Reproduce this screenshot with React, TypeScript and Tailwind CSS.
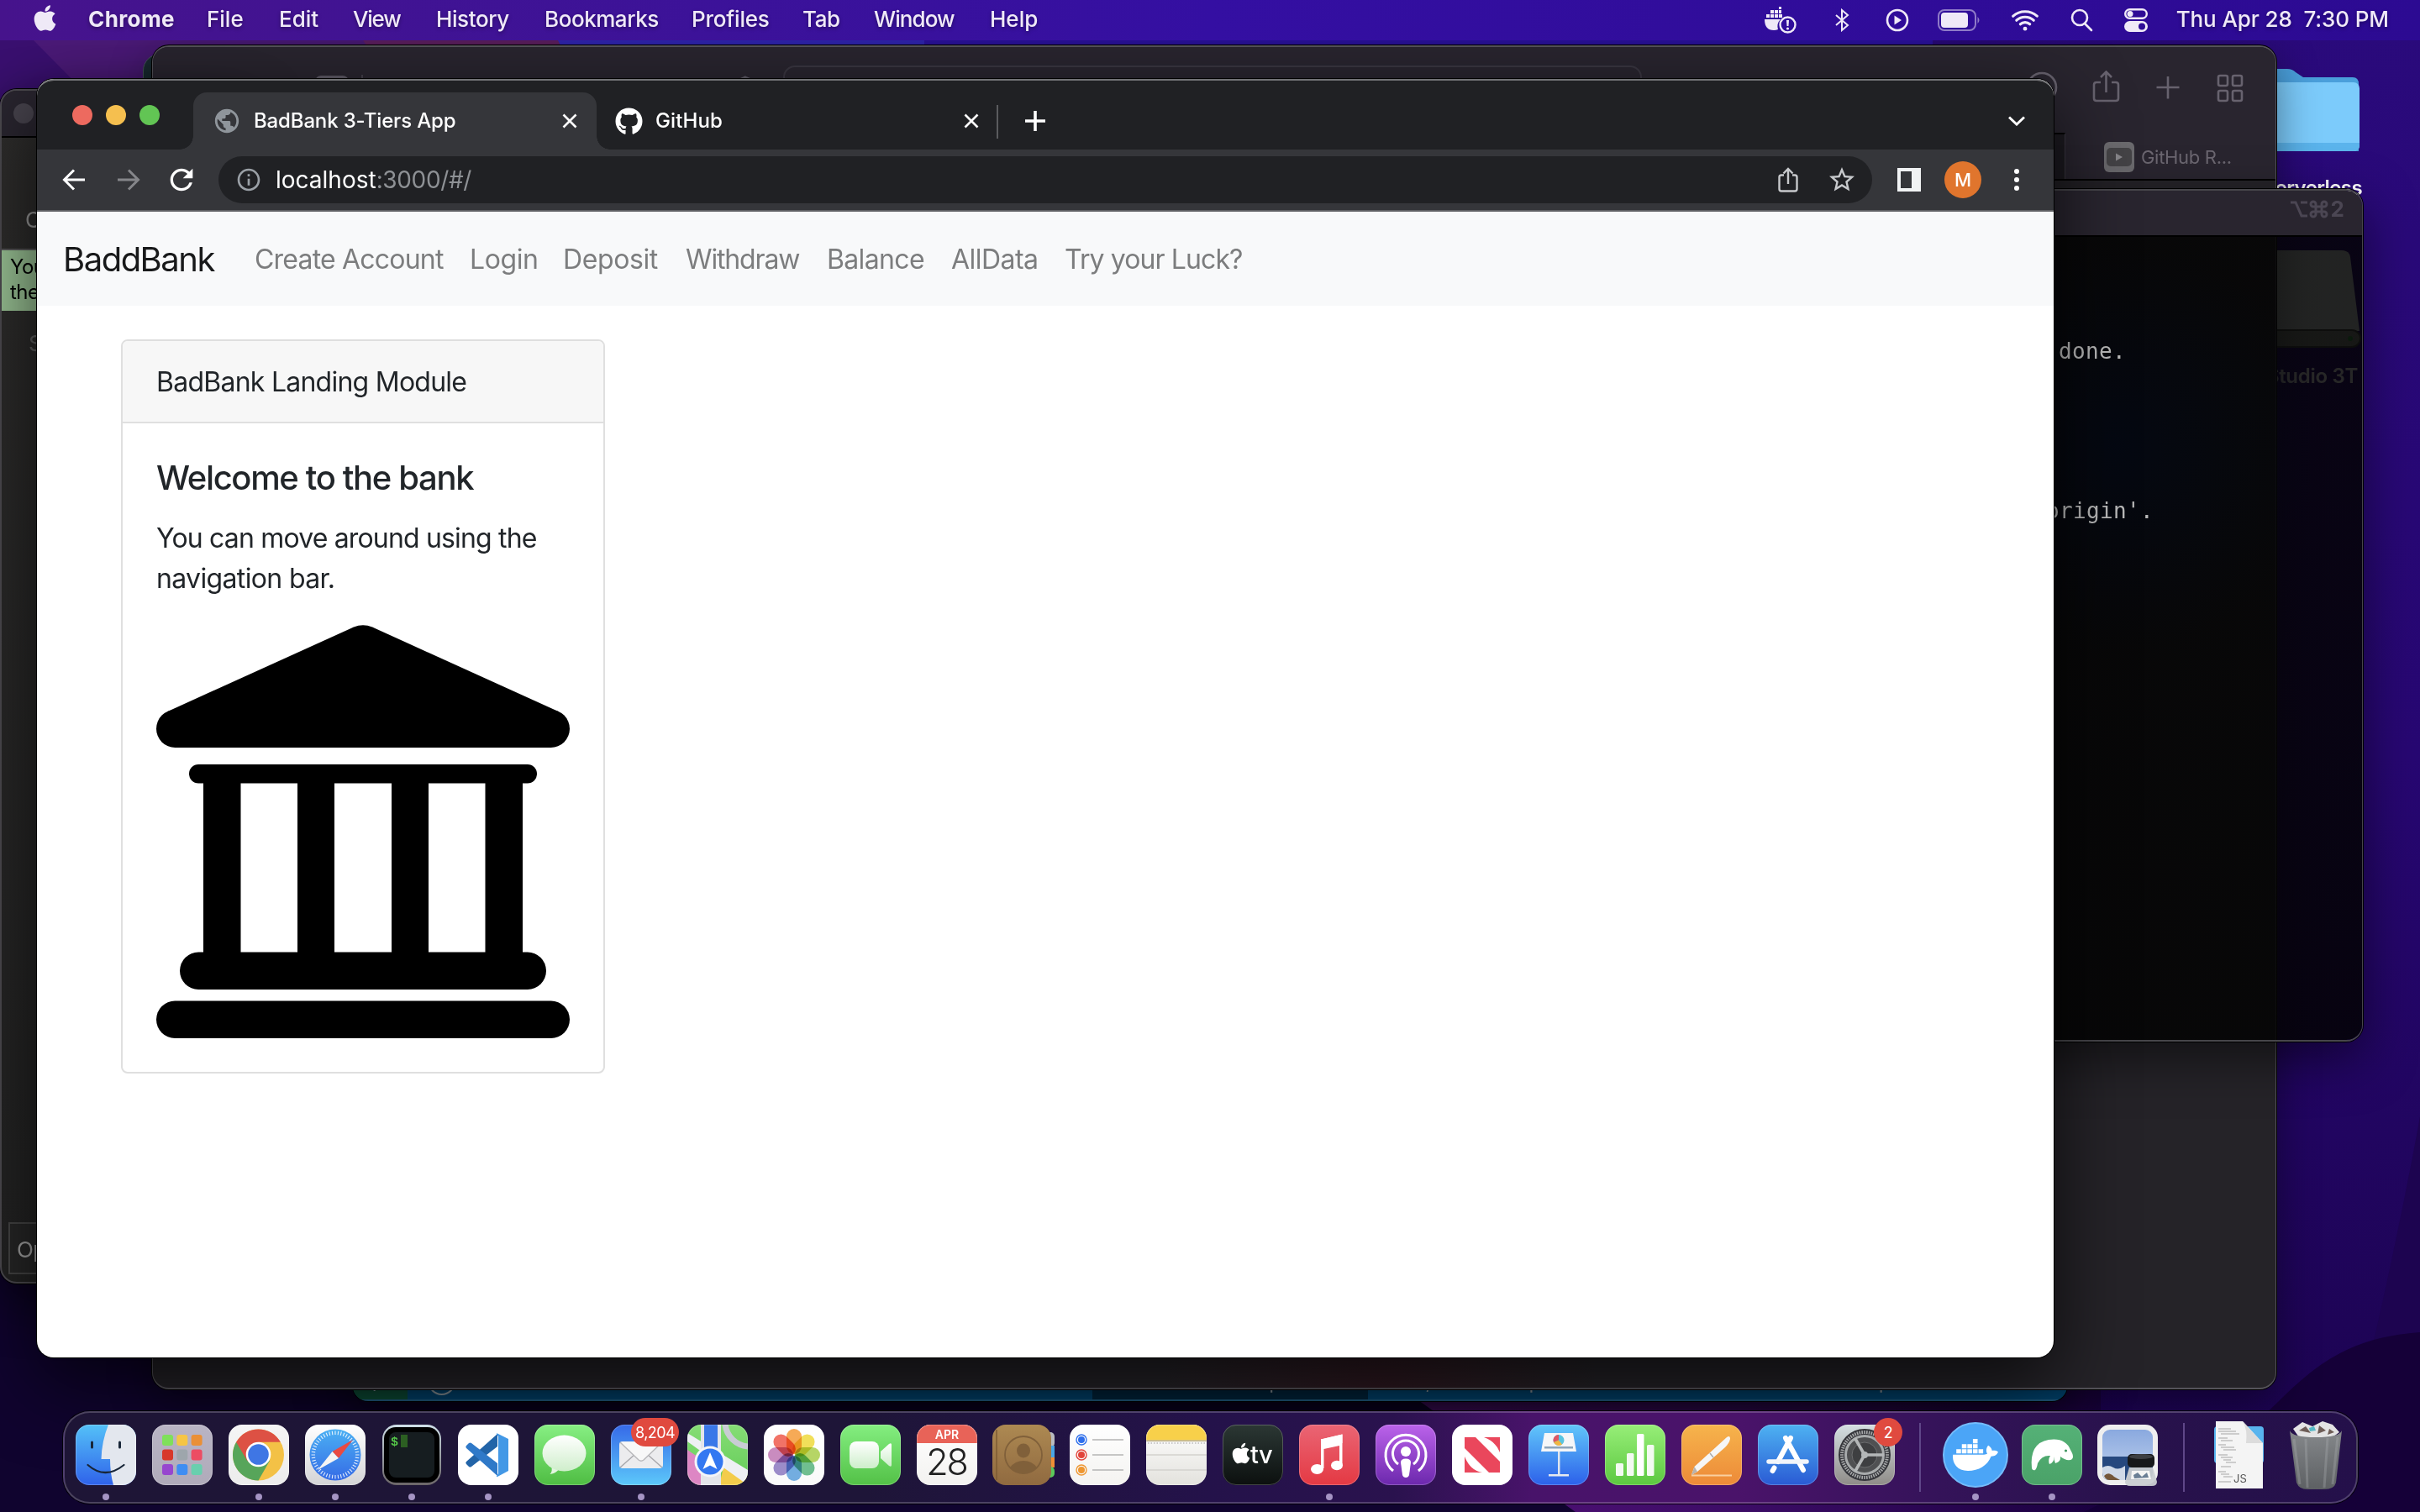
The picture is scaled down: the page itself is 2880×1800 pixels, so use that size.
import React from "react";
import { FaApple, FaGithub, FaDocker } from "react-icons/fa";
import { MdInfoOutline, MdPublic, MdRefresh, MdStarBorder } from "react-icons/md";
import { IoWifi } from "react-icons/io5";

const sans = "font-[Inter,'Liberation_Sans',sans-serif]";

/* ---------- Wallpaper ---------- */

function Wallpaper() {
  return (
    <svg className="absolute inset-0" width="2880" height="1800" viewBox="0 0 2880 1800">
      <defs>
        <linearGradient id="wallBase" x1="0" y1="0" x2="0" y2="1">
          <stop offset="0" stopColor="#2a0a7c" />
          <stop offset="0.5" stopColor="#270772" />
          <stop offset="1" stopColor="#1b034e" />
        </linearGradient>
        <linearGradient id="wallPink" x1="0" y1="0" x2="1" y2="0">
          <stop offset="0" stopColor="#56127a" />
          <stop offset="0.5" stopColor="#3c0c66" />
          <stop offset="1" stopColor="#1a0040" />
        </linearGradient>
      </defs>
      <rect width="2880" height="1800" fill="url(#wallBase)" />
      <path d="M0 0H700V400H0Z" fill="#4b1a78" />
      <path d="M0 48H40L180 190V400H0Z" fill="#3a1070" />
      <path d="M400 0H700V60H440Z" fill="#5f1f62" />
      <path d="M640 0H1100V60H670Z" fill="#3226b6" />
      <path d="M1100 0H2300V60H1100Z" fill="#2c12a0" />
      <path d="M2880 1330C2840 1640 2770 1880 2700 2000H2880Z" fill="#1d0450" />
      <path d="M2880 1330C2830 1600 2760 1880 2710 2000V2000H2880Z" fill="#1d0450" />
      <path d="M0 1500H2000V1800H0Z" fill="#10042f" />
      <path d="M1650 1640L1875 1800H2500V1640Z" fill="url(#wallPink)" />
      <path d="M2880 1586C2800 1592 2760 1620 2710 1670C2640 1740 2560 1760 2480 1800H2880Z" fill="#150038" />
    </svg>
  );
}

function DesktopIcons() {
  return (
    <div className={`absolute left-[2660px] top-[72px] w-[151px] flex flex-col items-end ${sans}`}>
      <svg width="151" height="116" viewBox="0 0 151 116">
        <path d="M14 20q0-10 10-10H62q6 0 10 4l9 6H140q7 0 7 8V108H14Z" fill="#4a9fdb" />
        <rect x="14" y="26" width="134" height="82" rx="7" fill="#7ccbfb" />
        <path d="M14 98H148V101q0 7-7 7H21q-7 0-7-7Z" fill="#5bb4ec" />
      </svg>
      <div className="mt-[20px] h-8 text-[24px] leading-8 font-semibold tracking-[-0.6px] text-white whitespace-nowrap">Serverless</div>
      <svg className="mt-[56px]" width="151" height="120" viewBox="0 0 151 120">
        <path d="M20 10q2-8 10-8H126q10 0 11 8L148 98H14Z" fill="#dfe6e2" />
        <rect x="8" y="97" width="141" height="20" rx="10" fill="#8f9488" stroke="#4a4d45" strokeWidth="2" />
        <circle cx="137" cy="107" r="3" fill="#3aa545" />
      </svg>
      <div className="mr-[5px] mt-[16px] h-8 text-[24px] leading-8 font-semibold tracking-[-0.3px] text-white whitespace-nowrap">Studio 3T</div>
    </div>
  );
}

/* ---------- Menu bar ---------- */

const menus: { label: string; cls: string }[] = [
  { label: "Chrome", cls: "w-[141px] font-bold tracking-[0.4px]" },
  { label: "File", cls: "w-[86px]" },
  { label: "Edit", cls: "w-[88px]" },
  { label: "View", cls: "w-[99px] tracking-[-1.2px]" },
  { label: "History", cls: "w-[129px] tracking-[-0.4px]" },
  { label: "Bookmarks", cls: "w-[175px] tracking-[-0.45px]" },
  { label: "Profiles", cls: "w-[132px] tracking-[-0.2px]" },
  { label: "Tab", cls: "w-[85px] tracking-[-0.4px]" },
  { label: "Window", cls: "w-[138px] tracking-[-0.9px]" },
  { label: "Help", cls: "w-[80px]" },
];

function MenuBar() {
  return (
    <header className={`absolute inset-x-0 top-0 flex h-12 items-center bg-linear-to-r from-[#46138c] via-[#340fa2] to-[#2c0a92] text-[26px] font-medium text-[#efe9f7] ${sans}`}>
      <FaApple className="ml-[38px] mb-[5px] size-[35px] w-[31px]" />
      <nav className="ml-[36px] flex pb-[3px] leading-[45px] [text-shadow:0_2px_4px_rgba(0,0,0,.35)]">
        {menus.map((m) => (
          <span key={m.label} className={`whitespace-nowrap ${m.cls}`}>{m.label}</span>
        ))}
      </nav>
      <div className="ml-auto flex items-center">
        <svg width="38" height="32" viewBox="0 0 38 32" fill="currentColor">
          <path d="M0 15H19q-5 5-3 12q-2 1-5 1Q0 28 0 15Z" />
          <path d="M2 9h4v4H2zM7 9h4v4H7zM12 9h4v4h-4zM7 4h4v4H7zM12 4h4v4h-4zM17 0h3v3h-3zM17 4h3v4h-3zM17 9h4v4h-4z" />
          <circle cx="27.500" cy="21.500" r="9" fill="none" stroke="currentColor" strokeWidth="2.400" />
          <path d="M26 16h3l-.5 7h-2z" />
          <circle cx="27.500" cy="26" r="1.600" />
        </svg>
        <svg className="ml-[45px]" width="18" height="28" viewBox="0 0 18 28" fill="none" stroke="currentColor" strokeWidth="2">
          <path d="M2 8L16 20L9 26V2L16 8L2 20" />
        </svg>
        <svg className="ml-[43px]" width="28" height="28" viewBox="0 0 28 28">
          <circle cx="14" cy="14" r="12" fill="none" stroke="currentColor" strokeWidth="2.600" />
          <path d="M10.500 8.500L19 14L10.500 19.500Z" fill="currentColor" />
        </svg>
        <svg className="ml-[34px]" width="52" height="26" viewBox="0 0 52 26">
          <rect x="1" y="1" width="44" height="24" rx="7" fill="none" stroke="currentColor" strokeOpacity=".5" strokeWidth="2" />
          <rect x="4" y="4" width="32" height="18" rx="4" fill="currentColor" />
          <path d="M47.500 9q4 4 0 8z" fill="currentColor" fillOpacity=".5" />
        </svg>
        <IoWifi className="ml-[33px] h-[38px] w-[38px]" />
        <svg className="ml-[34px]" width="28" height="28" viewBox="0 0 28 28" fill="none" stroke="currentColor" strokeWidth="2.600">
          <circle cx="12" cy="11" r="9" />
          <path d="M18 18L26 26" strokeLinecap="round" />
        </svg>
        <svg className="ml-[37px]" width="28" height="28" viewBox="0 0 28 28">
          <rect x="1.200" y="1.200" width="25.600" height="10.600" rx="5.300" fill="none" stroke="currentColor" strokeWidth="2.400" />
          <circle cx="7" cy="6.500" r="3.500" fill="currentColor" />
          <rect x="0" y="15" width="28" height="13" rx="6.500" fill="currentColor" />
          <circle cx="21" cy="21.500" r="4" fill="#2e0c96" />
        </svg>
        <span className="ml-[34px] mr-[37px] whitespace-pre pb-[3px] leading-[45px] tracking-[-0.1px] [text-shadow:0_2px_4px_rgba(0,0,0,.35)]">Thu Apr 28  7:30 PM</span>
      </div>
    </header>
  );
}

/* ---------- Background windows ---------- */

function EditorWindow() {
  return (
    <>
      <div className="absolute left-[170px] top-[64px] h-[900px] w-[600px] rounded-[20px] border border-[#4a5a60] bg-[#1c2f36]" />
      <div className={`absolute left-[420px] top-[1200px] flex h-[468px] w-[2040px] items-end overflow-hidden rounded-b-[18px] bg-[#005083] text-[24px] text-[#a9b6be] shadow-[0_0_0_1px_#000,0_20px_60px_rgba(0,0,0,.6)] ${sans}`}>
        <div className="flex h-[46px] w-full items-start border-b-2 border-white/15 leading-[46px]">
          <div className="h-11 w-[65px] bg-[#0f5a40] pl-6">/</div>
          <div className="flex-1 pl-6 whitespace-nowrap">◯ 1 △ 1</div>
          <div className="h-11 w-[328px] bg-[#002c48] pl-6 tracking-[-0.4px] whitespace-nowrap">Screen Reader Optimized</div>
          <div className="flex w-[832px] gap-10 pl-6 whitespace-nowrap">
            <span>Ln 1, Col 1</span><span>Spaces: 2</span><span>UTF-8</span><span>LF</span><span>JavaScript</span>
          </div>
        </div>
      </div>
    </>
  );
}

function SafariWindow() {
  return (
    <section className={`absolute left-[181px] top-[54px] h-[1600px] w-[2528px] overflow-hidden rounded-[20px] border border-[#55535a] border-t-2 border-b-2 bg-[#252328] bg-[radial-gradient(circle_at_1460px_1600px,#2e1820,rgba(46,24,32,0)_260px)] shadow-[0_0_0_1px_#000,0_16px_50px_rgba(0,0,0,.45)] ${sans}`}>
      <div className="flex h-[102px] items-start bg-[#29252f]">
        <svg className="ml-[193px] mt-[33px] shrink-0" width="60" height="30" viewBox="0 0 60 30" fill="none" stroke="#5d5965" strokeWidth="4">
          <rect x="2" y="3" width="36" height="26" rx="5" />
          <path d="M56 0V30" strokeWidth="2" strokeOpacity=".5" />
        </svg>
        <svg className="ml-[439px] mt-[34px] shrink-0" width="26" height="30" viewBox="0 0 26 30" fill="none" stroke="#5d5965" strokeWidth="3"><path d="M13 2L24 7V20L13 28L2 20V7Z" /></svg>
        <div className="ml-[32px] mt-[22px] h-14 w-[1022px] shrink-0 rounded-[14px] border-2 border-[#3a3641]" />
        <svg className="ml-auto mr-[31px] mt-[28px] shrink-0" width="264" height="44" viewBox="0 0 264 44" fill="none" stroke="#67626e" strokeWidth="2.600">
          <circle cx="17" cy="20" r="17" />
          <path d="M87 14h-5q-3 0-3 3v16q0 3 3 3h23q3 0 3-3v-16q0-3-3-3h-5M93.500 26V2M87 8l6.500-6.500L100 8" />
          <path d="M167 7V33.500M153.500 20h27" />
          <rect x="227" y="6" width="11" height="12" rx="2" /><rect x="244" y="6" width="11" height="12" rx="2" />
          <rect x="227" y="24" width="11" height="12" rx="2" /><rect x="244" y="24" width="11" height="12" rx="2" />
        </svg>
      </div>
      <div className="flex h-[57px] border-b-2 border-black bg-[#29252f]">
        <div className="w-[2276px] border-t-2 border-r border-t-black border-r-[#3c3843] bg-[#1d1b21]" />
        <div className="flex items-center pl-[46px] pt-[3px]">
          <svg width="36" height="36" viewBox="0 0 36 36">
            <rect width="36" height="36" rx="6" fill="#6b6a6e" />
            <rect x="3" y="7" width="30" height="22" rx="5" fill="#454447" />
            <path d="M14 13.500L22 18L14 22.500Z" fill="#89888c" />
          </svg>
          <span className="ml-[8px] text-[22px] tracking-[-0.3px] text-[#6b6670]">GitHub R...</span>
        </div>
      </div>
    </section>
  );
}

function TerminalWindow() {
  return (
    <section className="absolute left-[1700px] top-[225px] h-[1015px] w-[1112px] overflow-hidden rounded-[20px] border border-[#47464b] border-t-2 border-b-2 shadow-[0_0_0_1px_#000,0_20px_60px_rgba(0,0,0,.5)]">
      <div className={`flex h-[55px] items-center justify-end border-b-2 border-black bg-[#29252f] pr-[21px] pb-[10px] text-[26px] font-bold text-[#4b4653] ${sans}`}>
        <svg className="mr-[2px]" width="46" height="22" viewBox="0 0 46 22" fill="none" stroke="currentColor" strokeWidth="3">
          <path d="M0 3H6L13 19H20M12 3H20" />
          <path d="M30 8V5a3 3 0 1 0-3 3H40a3 3 0 1 0-3-3V17a3 3 0 1 0 3-3H27a3 3 0 1 0 3 3Z" />
        </svg>
        <span>2</span>
      </div>
      <div className="h-[960px] bg-[radial-gradient(circle_at_820px_250px,rgba(2,6,16,.93),rgba(3,3,3,.86)_240px,rgba(2,2,2,.86))] pl-[734px] font-['DejaVu_Sans_Mono','Liberation_Mono',monospace] text-[26px] leading-[32px] tracking-[0.35px] text-[#b9b9b9]">
        <div className="pt-[120px] pl-[15px]">done.</div>
        <div className="pt-[158px]">origin'.</div>
      </div>
    </section>
  );
}

function LeftWindow() {
  return (
    <section className={`absolute left-0 top-[106px] flex h-[1422px] w-[300px] flex-col overflow-hidden rounded-[20px] border-2 border-[#4c4a4f] bg-linear-to-b from-[#2e2d2c] to-[#222] shadow-[0_0_0_1px_#000,0_20px_60px_rgba(0,0,0,.6)] ${sans}`}>
      <div className="flex h-[56px] shrink-0 items-center border-b-2 border-black bg-[#29252f] pl-[14px]">
        <div className="size-6 rounded-full bg-[#47434d]" />
      </div>
      <div className="mt-[81px] pl-[28px] text-[26px] leading-[34px] text-[#969696]">Console</div>
      <div className="mt-[17px] h-[74px] border-t-2 border-[#555] bg-[#98c093] pl-[10px] pt-[5px] text-[24px] leading-[30px] tracking-[-0.5px] text-black">
        <div>You</div>
        <div>the</div>
      </div>
      <div className="mt-[22px] pl-[32px] text-[26px] leading-[34px] text-[#5e5e5e]">Search</div>
      <div className="mt-auto mb-[9px] ml-[8px] flex h-[62px] items-center border-2 border-[#444] bg-[#262626] pl-[8px] pt-[2px] text-[26px] tracking-[-0.6px] text-[#a2a2a2]">Open</div>
    </section>
  );
}

/* ---------- Browser ---------- */

function CloseX() {
  return (
    <svg width="18" height="18" viewBox="0 0 18 18" stroke="#fff" strokeWidth="2.600" fill="none"><path d="M1.500 1.500L16.500 16.500M16.500 1.500L1.500 16.500" /></svg>
  );
}

function TabStrip() {
  return (
    <div className="flex h-[82px] items-end bg-[#202124] text-[24px] font-medium text-white">
      <div className="flex w-[170px] gap-4 pl-[42px] pb-[29px]">
        <div className="size-6 rounded-full bg-[#ed6a5f]" />
        <div className="size-6 rounded-full bg-[#f5bf4f]" />
        <div className="size-6 rounded-full bg-[#62c554]" />
      </div>
      <div className="h-4 w-4 bg-[radial-gradient(circle_at_0_0,#202124_15.500px,#35363a_16px)]" />
      <div className="flex h-[68px] w-[480px] items-center rounded-t-2xl bg-[#35363a] pl-[23px] pr-[23px]">
        <MdPublic className="size-[34px] text-[#8f959b]" />
        <span className="ml-[15px] tracking-[-0.15px]">BadBank 3-Tiers App</span>
        <span className="ml-auto"><CloseX /></span>
      </div>
      <div className="h-4 w-4 bg-[radial-gradient(circle_at_100%_0,#202124_15.500px,#35363a_16px)]" />
      <div className="flex h-[68px] w-[460px] items-center pl-[6px] pr-[21px]">
        <FaGithub className="size-[33px]" />
        <span className="ml-[15px] tracking-[0.1px]">GitHub</span>
        <span className="ml-auto"><CloseX /></span>
      </div>
      <div className="flex h-[68px] flex-1 items-center">
        <div className="mt-[2px] h-10 w-[2px] bg-[#5a5b5e]" />
        <svg className="ml-[32px]" width="24" height="24" viewBox="0 0 24 24" stroke="#fff" strokeWidth="3.600"><path d="M12 0V24M0 12H24" /></svg>
        <svg className="ml-auto mr-[34px]" width="20" height="12" viewBox="0 0 20 12" fill="none" stroke="#fff" strokeWidth="3"><path d="M1 1.500L10 10L19 1.500" /></svg>
      </div>
    </div>
  );
}

function Toolbar() {
  return (
    <div className="flex h-[74px] items-center border-b-2 border-[#5f6063] bg-[#35363a]">
      <svg className="ml-[30px]" width="28" height="26" viewBox="0 0 28 26" fill="none" stroke="#fff" strokeWidth="3"><path d="M27 13H3M14 1.500L2.500 13L14 24.500" /></svg>
      <svg className="ml-[37px]" width="28" height="26" viewBox="0 0 28 26" fill="none" stroke="#85868a" strokeWidth="3"><path d="M1 13H25M14 1.500L25.500 13L14 24.500" /></svg>
      <MdRefresh className="ml-[29px] size-[40px] text-white" />
      <div className="ml-[24px] flex h-14 w-[1968px] items-center rounded-full bg-[#202124] pl-[20px] pr-[18px] text-[28px]">
        <MdInfoOutline className="size-[32px] text-[#9aa0a6]" />
        <span className="ml-[16px] text-white">localhost</span>
        <span className="tracking-[-0.35px] text-[#8e9195]">:3000/#/</span>
        <svg className="ml-auto" width="24" height="30" viewBox="0 0 24 30" fill="none" stroke="#c7c9cc" strokeWidth="2.400">
          <path d="M7 9.500H4q-2.500 0-2.500 2.500v14q0 2.500 2.500 2.500h16q2.500 0 2.500-2.500v-14q0-2.500-2.500-2.500h-3M12 20V2.500M6.500 7.500L12 2L17.500 7.500" />
        </svg>
        <MdStarBorder className="ml-[34px] size-[36px] text-[#c7c9cc]" />
      </div>
      <svg className="ml-[30px]" width="28" height="28" viewBox="0 0 28 28"><path d="M0 0H28V28H0ZM4 4V24H17V4Z" fill="#f1f3f4" fillRule="evenodd" /></svg>
      <div className="ml-[28px] flex size-11 items-center justify-center rounded-full bg-[#e0752d] text-[22px] font-medium text-white">M</div>
      <svg className="ml-[39px]" width="6" height="28" viewBox="0 0 6 28" fill="#fff"><circle cx="3" cy="4" r="3" /><circle cx="3" cy="14" r="3" /><circle cx="3" cy="24" r="3" /></svg>
    </div>
  );
}

const links: { label: string; cls: string }[] = [
  { label: "Create Account", cls: "tracking-[-0.8px] w-[256px]" },
  { label: "Login", cls: "tracking-[-0.4px] w-[111px]" },
  { label: "Deposit", cls: "tracking-[-0.4px] w-[146px]" },
  { label: "Withdraw", cls: "tracking-[-1.15px] w-[168px]" },
  { label: "Balance", cls: "tracking-[-0.65px] w-[148px]" },
  { label: "AllData", cls: "tracking-[-0.55px] w-[135px]" },
  { label: "Try your Luck?", cls: "tracking-[-0.9px]" },
];

function BankIcon() {
  return (
    <svg className="mt-[31px] block" width="492" height="492" viewBox="0 0 492 492" fill="#000">
      <path d="M235 2.500Q246-2 257 2.500L478.500 103L470 146H22L13.500 103Z" />
      <circle cx="22.500" cy="123.500" r="22.500" /><circle cx="469.500" cy="123.500" r="22.500" />
      <rect x="39" y="166" width="414" height="22.500" rx="11.200" />
      <path d="M56 180H100.500V395H56ZM168 180H212V395H168ZM280 180H324V395H280ZM391.500 180H436V395H391.500Z" />
      <rect x="28" y="389.500" width="436" height="44.500" rx="22.200" />
      <rect x="0" y="447.500" width="492" height="44.500" rx="22.200" />
    </svg>
  );
}

function BrowserWindow() {
  return (
    <section className={`absolute left-[44px] top-[94px] h-[1522px] w-[2400px] rounded-[20px] bg-white shadow-[0_0_0_1px_#000,0_30px_90px_rgba(0,0,0,.7)] ${sans}`}>
      <div className="overflow-hidden rounded-t-[20px] border-t-2 border-[#717275]">
        <TabStrip />
        <Toolbar />
      </div>
      <nav className="flex h-28 items-center bg-[#f8f9fa] pl-[31px] pt-[2px] text-[32px] text-[#7c7d7e]">
        <span className="w-[228px] text-[40px] tracking-[-1.5px] text-[#18191a]">BaddBank</span>
        {links.map((l) => (
          <span key={l.label} className={`whitespace-nowrap ${l.cls}`}>{l.label}</span>
        ))}
      </nav>
      <main className="pl-[100px] pt-10">
        <article className="w-[576px] overflow-hidden rounded-lg border-2 border-[#dfdfdf] text-[32px] leading-[48px] text-[#212529]">
          <div className="h-[98px] border-b-2 border-[#dfdfdf] bg-[#f7f7f7] px-[40px] pt-[25px] tracking-[-0.75px]">BadBank Landing Module</div>
          <div className="p-10">
            <h5 className="pt-px text-[40px] font-medium tracking-[-1.35px]">Welcome to the bank</h5>
            <p className="mt-[24px] tracking-[-0.83px]">You can move around using the<br /><span className="tracking-[-0.65px]">navigation bar.</span></p>
            <BankIcon />
          </div>
        </article>
      </main>
    </section>
  );
}

/* ---------- Dock ---------- */

function Grad({ id, a, b }: { id: string; a: string; b: string }) {
  return (
    <defs>
      <linearGradient id={id} x1="0" y1="0" x2="0" y2="1"><stop offset="0" stopColor={a} /><stop offset="1" stopColor={b} /></linearGradient>
    </defs>
  );
}

function Tile({ id, a, b, children }: { id: string; a: string; b: string; children?: React.ReactNode }) {
  return (
    <svg width="72" height="72" viewBox="0 0 72 72" className="overflow-visible">
      <Grad id={id} a={a} b={b} />
      <clipPath id={id + "c"}><rect width="72" height="72" rx="16" /></clipPath>
      <rect width="72" height="72" rx="16" fill={`url(#${id})`} />
      <g clipPath={`url(#${id}c)`}>{children}</g>
      <rect x=".5" y=".5" width="71" height="71" rx="15.500" fill="none" stroke="#fff" strokeOpacity=".22" />
    </svg>
  );
}

const launchColors = ["#7fe05a", "#f6c545", "#ea8f36", "#d8382a", "#9ea6ac", "#ec4c63", "#9746cf", "#3f8df2", "#69cfae"];
const petals = ["#f59b38", "#efd93d", "#a9ce4b", "#57b37c", "#5a9fdb", "#8b78c0", "#c078b4", "#ee5b4c"];
const ticks = Array.from({ length: 48 }, (_, i) => i * 7.5);
const teeth = Array.from({ length: 60 }, (_, i) => i * 6);

function DockItem({ running, badge, children }: { running?: boolean; badge?: string; children: React.ReactNode }) {
  return (
    <div className="relative flex h-[106px] w-[91px] flex-col items-center pt-[14px]">
      <div className="flex h-[72px] items-center justify-center">{children}</div>
      {running && <div className="mt-[10px] size-2 rounded-full bg-[#a594c4]" />}
      {badge && (
        <div className={`absolute top-[6px] flex h-[34px] min-w-[34px] items-center justify-center rounded-full bg-[#e04a3f] text-[18px] tracking-[-0.6px] text-white ${badge.length > 1 ? "left-[34px] w-[57px]" : "left-[57px]"}`}>{badge}</div>
      )}
    </div>
  );
}

function Separator() {
  return <div className="flex w-[41px] justify-center"><div className="mt-[12px] h-[82px] w-[2px] bg-[#5f4788]" /></div>;
}

function Dock() {
  return (
    <footer className={`absolute left-[75px] top-[1680px] flex h-[110px] w-[2731px] rounded-[32px] border-2 border-white/20 bg-[linear-gradient(90deg,#1e1536_0%,#1e1538_35%,#24124a_50%,#2a124e_58%,#48136a_64%,#4a136a_73%,#341359_82%,#28124c_90%,#24104a_100%)] pl-[3px] shadow-[0_0_0_1px_rgba(0,0,0,.8)] ${sans}`}>
      <DockItem running>
        <Tile id="finder" a="#54c1f8" b="#2f62ea">
          <path d="M39 0Q31 20 30.500 41H41Q41 58 45 72H72V0Z" fill="#e3e7ee" />
          <path d="M19.500 21V27M52.500 21V27" stroke="#182638" strokeWidth="3" strokeLinecap="round" />
          <path d="M14.500 48Q35 66 57.500 48" fill="none" stroke="#182638" strokeWidth="2.200" strokeLinecap="round" />
        </Tile>
      </DockItem>
      <DockItem>
        <Tile id="launch" a="#b9b4c4" b="#b0abba">
          {launchColors.map((c, i) => <rect key={c} x={12 + (i % 3) * 17.3} y={12 + Math.floor(i / 3) * 17.5} width="13" height="13" rx="3" fill={c} />)}
        </Tile>
      </DockItem>
      <DockItem running>
        <Tile id="chrome" a="#f5f5f5" b="#ececec">
          <circle cx="35.500" cy="36" r="30.500" fill="#f3c146" />
          <path d="M35.500 36L9.100 20.700A30.500 30.500 0 0 0 35.500 66.500L49 43Z" fill="#57a55a" />
          <path d="M9.100 20.700A30.500 30.500 0 0 1 61.900 20.700H36L22.500 43.500Z" fill="#dd5144" />
          <circle cx="35.500" cy="35.500" r="14.800" fill="#fff" /><circle cx="35.500" cy="35.500" r="12.300" fill="#3f76e4" />
        </Tile>
      </DockItem>
      <DockItem running>
        <Tile id="safari" a="#ffffff" b="#d4d4d6">
          <Grad id="safariDial" a="#4bb0f3" b="#356be6" />
          <circle cx="36" cy="36" r="30.500" fill="url(#safariDial)" />
          {ticks.map((t) => <path key={t} d="M36 7.500V12" stroke="#fff" strokeOpacity=".85" strokeWidth="1.100" transform={`rotate(${t} 36 36)`} />)}
          <path d="M57 18L40 40L32.500 32Z" fill="#e94a43" /><path d="M15 54L32.500 32L40 40Z" fill="#f4f4f4" />
        </Tile>
      </DockItem>
      <DockItem running>
        <svg width="72" height="72" viewBox="0 0 72 72">
          <Grad id="term" a="#cfdfe8" b="#6b6668" />
          <rect x="1" width="70" height="72" rx="17" fill="url(#term)" />
          <rect x="3" y="3" width="66" height="66" rx="14" fill="#000" />
          <rect x="9" y="9" width="54" height="54" rx="8" fill="#161d20" />
          <rect x="23" y="12" width="8" height="15" fill="#2c5f22" />
          <text x="11" y="25" fontSize="15" fontWeight="700" fill="#55c648" fontFamily="'Liberation Mono', monospace">$</text>
        </svg>
      </DockItem>
      <DockItem running>
        <Tile id="code" a="#ffffff" b="#ffffff">
          <path d="M47 11L10 44q-1.500 1.500 0 3l3 3q1.500 1 3 0L47 26Z" fill="#2264a8" />
          <path d="M47 61L10 28q-1.500-1.500 0-3l3-3q1.500-1 3 0L47 46Z" fill="#2f79c8" />
          <path d="M46 61.500q-1 .5 1 .5L60 55V17L47 10.500q-2-.5-1 1L48 14V58Z" fill="#4398e6" />
        </Tile>
      </DockItem>
      <DockItem>
        <Tile id="msg" a="#87ef83" b="#4fbd43">
          <Grad id="msgBubble" a="#ffffff" b="#cfeecb" />
          <path d="M20 48Q22 56 18.500 59Q26 58 29 53Z" fill="#e4f6e2" />
          <ellipse cx="35.500" cy="34" rx="26" ry="21.500" fill="url(#msgBubble)" />
        </Tile>
      </DockItem>
      <DockItem running badge="8,204">
        <Tile id="mail" a="#3669e8" b="#5cc8fa">
          <rect x="10" y="20" width="52" height="32" rx="4" fill="#ececee" />
          <path d="M11 51L29 35M61 51L43 35" stroke="#a9a9ad" strokeWidth="1.500" />
          <path d="M11 21L33 42q3 2.500 6 0L61 21" fill="#f8f8f8" stroke="#b9b9bc" strokeWidth="1.500" />
        </Tile>
      </DockItem>
      <DockItem>
        <Tile id="maps" a="#86dd75" b="#63cc58">
          <path d="M0 30V72H18V42Z" fill="#dd86c4" />
          <path d="M38 72H72V60L46 38Z" fill="#f3cc4b" />
          <path d="M0 14L72 66V48L0 4Z" fill="#eef0f4" transform="translate(0 6)" />
          <path d="M16 0H40V72H16Z" fill="#e4e5ea" /><path d="M20 0H36V34H20Z" fill="#3a78e8" />
          <path d="M45 0A30 30 0 0 0 72 26" fill="none" stroke="#c9ccd4" strokeWidth="7" />
          <circle cx="27" cy="44" r="18.500" fill="#f4f5f8" /><circle cx="27" cy="44" r="15.500" fill="#3478f1" />
          <path d="M27 33L35.500 53L27 48.500L18.500 53Z" fill="#fff" />
        </Tile>
      </DockItem>
      <DockItem>
        <Tile id="photos" a="#ffffff" b="#fafafa">
          {petals.map((c, i) => <rect key={c} x="27" y="5" width="18" height="30" rx="9" fill={c} fillOpacity=".85" transform={`rotate(${i * 45} 36 36)`} className="mix-blend-multiply" />)}
        </Tile>
      </DockItem>
      <DockItem>
        <Tile id="ft" a="#84ee80" b="#53c147">
          <Grad id="ftCam" a="#ffffff" b="#cdeeca" />
          <rect x="11" y="20" width="35" height="32" rx="8" fill="url(#ftCam)" /><path d="M48 32L58 23q3-2 3 1V48q0 3-3 1L48 40Z" fill="url(#ftCam)" />
        </Tile>
      </DockItem>
      <DockItem>
        <Tile id="cal" a="#ffffff" b="#f3f2f0">
          <rect width="72" height="22" fill="#e86358" />
          <text x="36" y="17" textAnchor="middle" fontSize="14" fontWeight="600" fill="#fff" fontFamily="Inter, sans-serif">APR</text>
          <text x="35.500" y="60" textAnchor="middle" fontSize="43" fontWeight="300" letterSpacing="-2" fill="#222" fontFamily="Inter, sans-serif">28</text>
        </Tile>
      </DockItem>
      <DockItem>
        <svg width="74" height="72" viewBox="0 0 74 72">
          <rect x="50" y="9" width="24" height="18" rx="5" fill="#b9bcc0" /><rect x="50" y="25" width="24" height="14" fill="#4aa6e6" />
          <rect x="50" y="39" width="24" height="12" fill="#f08e35" /><rect x="50" y="50" width="24" height="13" rx="5" fill="#5bc95a" />
          <Grad id="contacts" a="#ad8952" b="#906a40" />
          <rect width="70" height="72" rx="16" fill="url(#contacts)" />
          <path d="M5 6V66" stroke="#7d5b33" strokeWidth="1.500" />
          <circle cx="37" cy="36" r="22" fill="none" stroke="#80603a" strokeWidth="1.800" />
          <ellipse cx="37" cy="31" rx="8" ry="8.500" fill="#80603a" /><path d="M21 51Q27 43 37 43T53 51Q46 58 37 58T21 51Z" fill="#80603a" />
        </svg>
      </DockItem>
      <DockItem>
        <Tile id="rem" a="#ffffff" b="#f4f3f1">
          {["#2f6fec", "#e2443b", "#ee9630"].map((c, i) => (
            <g key={c}><circle cx="14" cy={18 + i * 18} r="6" fill="none" stroke={c} strokeWidth="1.400" /><circle cx="14" cy={18 + i * 18} r="4" fill={c} /><path d={`M27 ${18 + i * 18}H64`} stroke="#b5b5b5" strokeWidth="1.500" /></g>
          ))}
        </Tile>
      </DockItem>
      <DockItem>
        <Tile id="notes" a="#ffffff" b="#e3e2dd">
          <rect width="72" height="18.500" fill="#f8d04a" />
          <path d="M0 19.300H72" stroke="#b9ab7c" strokeWidth="1.500" /><path d="M2 22H72" stroke="#bbb" strokeWidth="1.500" strokeDasharray="1.500 2" /><path d="M0 36H72M0 54H72" stroke="#d3d2ce" strokeWidth="1.500" />
        </Tile>
      </DockItem>
      <DockItem>
        <Tile id="tv" a="#2b3734" b="#0c100f">
          <FaApple x="8" y="20" size={28} color="#fff" />
          <text x="33" y="46" fontSize="29" fontWeight="500" letterSpacing="-.5" fill="#fff" fontFamily="Inter, sans-serif">tv</text>
        </Tile>
      </DockItem>
      <DockItem running>
        <Tile id="music" a="#ea6574" b="#e43943">
          <path d="M26 17.500L51.500 11.500V48H48V25L29.500 29V52H26Z" fill="#fff" />
          <path d="M26 17.500L51.500 11.500V22L26 27Z" fill="#fff" />
          <ellipse cx="21.500" cy="53" rx="7.500" ry="6" fill="#fff" /><ellipse cx="45" cy="48.500" rx="7" ry="5.800" fill="#fff" />
        </Tile>
      </DockItem>
      <DockItem>
        <Tile id="pod" a="#bb63ea" b="#6c28ad">
          <path d="M21 55A24 24 0 1 1 51 55" fill="none" stroke="#fff" strokeWidth="3" /><path d="M27 47A15.500 15.500 0 1 1 45 47" fill="none" stroke="#fff" strokeWidth="3" />
          <circle cx="36" cy="32" r="6" fill="#fff" /><path d="M30 45q0-4.500 6-4.500t6 4.500L40 60q-1 3-4 3t-4-3Z" fill="#fff" />
        </Tile>
      </DockItem>
      <DockItem>
        <Tile id="news" a="#ffffff" b="#ffffff">
          <rect x="15" y="15" width="42" height="42" fill="#ea475c" />
          <path d="M15 24L48 57H36Q22 55 15 38ZM24 15H38Q52 20 57 33V47Z" fill="#fff" /><path d="M15 15H28L57 44V57H44L15 28Z" fill="#ea475c" />
        </Tile>
      </DockItem>
      <DockItem>
        <Tile id="key" a="#61c7fa" b="#2c60ea">
          <path d="M35 32H37.500V61H35Z" fill="#dfe5ee" /><path d="M24 59H48V61.500H24Z" fill="#e6e9ef" />
          <path d="M19 10H53L57 32H15Z" fill="#f5f6f8" /><path d="M19 26H53V28.500H19Z" fill="#8da4bb" />
          <circle cx="36" cy="18.500" r="6.500" fill="#58c4e0" /><path d="M36 18.500V12A6.500 6.500 0 0 0 30 21Z" fill="#e05563" /><path d="M36 18.500L30 21A6.500 6.500 0 0 0 40 23.500Z" fill="#f1b542" />
        </Tile>
      </DockItem>
      <DockItem>
        <Tile id="num" a="#97ee78" b="#5cc840">
          <rect x="13" y="46" width="9" height="15" rx="1.500" fill="#f3faf1" /><rect x="26" y="34" width="8.500" height="27" rx="1.500" fill="#f3faf1" /><rect x="38" y="11" width="8.500" height="50" rx="1.500" fill="#fff" /><rect x="50" y="24" width="8.500" height="37" rx="1.500" fill="#f3faf1" />
        </Tile>
      </DockItem>
      <DockItem>
        <Tile id="pages" a="#f6b44c" b="#ed8a38">
          <path d="M12 60.500H60" stroke="#f9cfa0" strokeWidth="2" /><path d="M12 60L15.500 50L54 15Q58 12 58 17Q57 22 52 27L19 56Z" fill="#f6f6f6" /><path d="M12 60L15.500 50L19 56Z" fill="#b9b3ac" /><path d="M34 34L38 39" stroke="#aaa" strokeWidth="1.500" />
        </Tile>
      </DockItem>
      <DockItem>
        <Tile id="store" a="#4eb2f2" b="#2a5ad4">
          <path d="M39 16L24 44M33 16L54 54M19.500 51.500L17.500 55" stroke="#fff" strokeWidth="6" strokeLinecap="round" />
          <path d="M13 44H58" stroke="#f2f5fa" strokeWidth="5.500" strokeLinecap="round" />
        </Tile>
      </DockItem>
      <DockItem badge="2">
        <Tile id="set" a="#d5dfe2" b="#8f8c88">
          <circle cx="36" cy="36" r="31" fill="#34353a" />
          {teeth.map((t) => <path key={t} d="M36 7V11" stroke="#a8aaab" strokeWidth="1.600" transform={`rotate(${t} 36 36)`} />)}
          <circle cx="36" cy="36" r="22.500" fill="#4f5052" stroke="#a8abac" strokeWidth="3" />
          <circle cx="36" cy="36" r="15" fill="#3e3f41" stroke="#6b6c6e" />
          <path d="M36 36H59M36 36L24.500 16M36 36L24.500 56" stroke="#b4b7b8" strokeWidth="3.600" /><circle cx="36" cy="36" r="4" fill="#b4b7b8" />
        </Tile>
      </DockItem>
      <Separator />
      <DockItem running>
        <div className="relative -my-1 flex size-[78px] items-center justify-center rounded-full border-2 border-[#74bcfb] bg-[#4ba5f7]">
          <FaDocker className="size-[54px] text-white" />
        </div>
      </DockItem>
      <DockItem running>
        <Tile id="manatee" a="#55b177" b="#4aa268">
          <path d="M12 52Q9 22 32 18Q52 15 58 30Q64 40 58 42Q52 43 46 38Q47 44 40 46Q38 42 39 38Q38 46 33 47Q31 42 34 37Q24 36 19 46Q18 52 16 54Q13 55 12 52Z" fill="#fff" />
          <circle cx="52.500" cy="31" r="1.600" fill="#3f9660" />
        </Tile>
      </DockItem>
      <DockItem>
        <svg width="76" height="76" viewBox="0 0 76 76">
          <Grad id="sky" a="#8aa9df" b="#c2d3ee" />
          <rect x="1" y="2" width="72" height="72" rx="15" fill="#efefef" />
          <rect x="7" y="8" width="60" height="60" rx="9" fill="url(#sky)" />
          <path d="M7 40H67V59q0 9-9 9H16q-9 0-9-9Z" fill="#26487e" /><path d="M7 53Q14 49 20 53T34 51V68H16q-9 0-9-9Z" fill="#cfd9e8" /><path d="M9 63Q14 57 21 64L28 68H16Q11 68 9 63Z" fill="#74573a" />
          <rect x="37" y="37" width="32" height="16" rx="5" fill="#17181a" /><ellipse cx="53" cy="40" rx="14" ry="3" fill="#3d3f42" />
          <path d="M39 53H67L72 70Q72 75 66 75H40Q34 75 34 70Z" fill="#c9cdd1" fillOpacity=".95" /><path d="M42 57H63L65 67H41Z" fill="#f4f4f4" /><path d="M44 62l5-3 5 5 6-5 2 6-17 1z" fill="#6b7f95" />
        </svg>
      </DockItem>
      <Separator />
      <DockItem>
        <svg width="60" height="80" viewBox="0 0 60 80" className="-my-1">
          <rect x="0" y="6" width="59" height="44" rx="4" fill="#58b4ee" />
          <path d="M2 0H34L58 26V80H2Z" fill="#f4f4f4" /><path d="M34 0Q40 10 38 26H58Z" fill="#dcdcdc" />
          <path d="M5 9H20M5 12H26M8 15H30M5 20H16M8 23H22M5 28H14M8 31H24M11 34H26M5 40H16M8 43H22M11 46H20M14 49H26M8 54H20M5 60H14M8 63H18M11 66H22M5 72H20" stroke="#a5a5a5" strokeWidth="1" />
          <text x="23" y="73" fontSize="13" fill="#555" fontFamily="Inter, sans-serif">JS</text>
        </svg>
      </DockItem>
      <DockItem>
        <svg width="64" height="82" viewBox="0 0 64 82" className="-my-1">
          <Grad id="bin" a="#85888b" b="#5d6063" />
          <path d="M5 10L16 2L28 7L40 1L52 5L60 14L52 20H12Z" fill="#e3e3e4" /><path d="M12 12l8-5 6 8zM36 6l8 6-10 4zM48 10l6 4-8 3z" fill="#6e5d57" /><path d="M24 9l6-2 2 5-7 1z" fill="#57b9c6" />
          <path d="M1 12Q4 20 32 20T63 12L56 74Q54 82 42 82H22Q12 82 9 74Z" fill="url(#bin)" />
          <path d="M6 22L13 76M20 22L22 80M46 21L42 80M58 20L52 76" stroke="#a9acaf" strokeOpacity=".35" strokeWidth="3" />
        </svg>
      </DockItem>
    </footer>
  );
}

export default function App() {
  return (
    <div className="relative h-[1800px] w-[2880px] overflow-hidden bg-[#1b034e]">
      <Wallpaper />
      <DesktopIcons />
      <EditorWindow />
      <SafariWindow />
      <TerminalWindow />
      <LeftWindow />
      <BrowserWindow />
      <MenuBar />
      <Dock />
    </div>
  );
}
